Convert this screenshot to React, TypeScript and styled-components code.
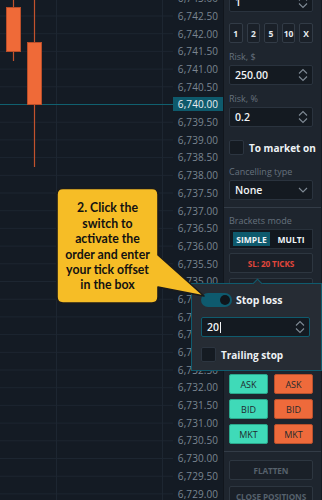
import React from 'react';
import styled, { createGlobalStyle } from 'styled-components';

const GlobalStyle = createGlobalStyle`
  html, body { margin: 0; padding: 0; background: #141b24; }
  body { font-family: "Open Sans", "Liberation Sans", sans-serif; }
`;

const STEP = 17.7;
const FIRST_Y = 16 - STEP;

const Screen = styled.div`
  position: relative;
  width: 322px;
  height: 500px;
  overflow: hidden;
  display: flex;
  background: #141b24;
`;

const ChartArea = styled.div`
  flex: none;
  width: 173px;
  height: 500px;
`;

const PriceAxis = styled.div`
  flex: none;
  width: 50px;
  display: flex;
  flex-direction: column;
  margin-top: ${FIRST_Y - STEP / 2}px;
`;

const PriceLabel = styled.div<{ $active?: boolean }>`
  flex: none;
  height: ${STEP}px;
  display: flex;
  align-items: center;
  justify-content: center;
  font-size: 10px;
  letter-spacing: 0.1px;
  color: ${p => (p.$active ? '#e8eef2' : '#7a8591')};
  background: ${p => (p.$active ? '#0e5a6c' : 'transparent')};
  ${p => p.$active && `height: 14px; margin: ${(STEP - 14) / 2}px 0;`}
`;

const Panel = styled.div`
  flex: none;
  width: 98px;
  background: #1e252e;
  border-left: 1px solid #11161d;
  display: flex;
  flex-direction: column;
  padding: 0 8px 0 5px;
  box-sizing: border-box;
`;

const Field = styled.div<{ $first?: boolean; $accent?: boolean }>`
  flex: none;
  height: 20px;
  box-sizing: border-box;
  background: #141a21;
  border: 1px solid ${p => (p.$accent ? '#0f5b6e' : '#2a333e')};
  border-radius: 2px;
  display: flex;
  align-items: center;
  justify-content: space-between;
  padding: 0 4px 0 5px;
  color: #f1f4f6;
  font-size: 10.5px;
  font-weight: 600;
  margin-top: ${p => (p.$first ? '-8px' : '0')};
`;

const Label = styled.div<{ $top: number }>`
  flex: none;
  margin-top: ${p => p.$top}px;
  margin-bottom: 3px;
  font-size: 9px;
  color: #66717d;
  line-height: 11px;
`;

const QuickRow = styled.div`
  flex: none;
  display: flex;
  gap: 4px;
  margin-top: 11px;
`;

const QuickButton = styled.div`
  width: 13px;
  height: 20px;
  box-sizing: border-box;
  border: 1px solid #323b46;
  border-radius: 2px;
  background: #1a2028;
  color: #e6ebef;
  font-size: 8.5px;
  font-weight: 700;
  display: flex;
  align-items: center;
  justify-content: center;
  flex: 1;
`;

const CheckRow = styled.div<{ $top: number }>`
  flex: none;
  display: flex;
  align-items: center;
  gap: 5px;
  margin-top: ${p => p.$top}px;
  color: #eef2f5;
  font-size: 10px;
  font-weight: 700;
  white-space: nowrap;
`;

const CheckBox = styled.div`
  width: 15px;
  height: 15px;
  flex: none;
  box-sizing: border-box;
  border: 1px solid #2c3540;
  background: #151b22;
  border-radius: 2px;
`;

const Separator = styled.div<{ $top: number }>`
  flex: none;
  height: 1px;
  background: #333c47;
  margin: ${p => p.$top}px -8px 0 -5px;
`;

const Segmented = styled.div`
  flex: none;
  display: flex;
  height: 20px;
  box-sizing: border-box;
  border: 1px solid #28313b;
  background: #12171e;
  padding: 2px 3px;
  gap: 3px;
`;

const Segment = styled.div<{ $on?: boolean }>`
  flex: ${p => (p.$on ? '0 0 37px' : '1')};
  display: flex;
  align-items: center;
  justify-content: center;
  background: ${p => (p.$on ? '#0e5a6d' : 'transparent')};
  color: #eef3f6;
  font-size: 8.5px;
  font-weight: 700;
`;

const TextButton = styled.div<{ $top: number; $color?: string }>`
  flex: none;
  height: 20px;
  margin-top: ${p => p.$top}px;
  box-sizing: border-box;
  border: 1px solid #2d3640;
  background: #1a2028;
  border-radius: 2px;
  display: flex;
  align-items: center;
  justify-content: center;
  font-size: 8.2px;
  font-weight: 700;
  letter-spacing: -0.1px;
  color: ${p => p.$color || '#56616c'};
  white-space: nowrap;
  overflow: hidden;
`;

const OrderGrid = styled.div`
  flex: none;
  display: grid;
  grid-template-columns: 1fr 1fr;
  column-gap: 6px;
  row-gap: 5px;
  margin-top: 76px;
`;

const OrderButton = styled.div<{ $side: 'buy' | 'sell' }>`
  height: 20px;
  box-sizing: border-box;
  border-radius: 2px;
  background: ${p => (p.$side === 'buy' ? '#3fdab8' : '#ee6a3b')};
  border: 1px solid ${p => (p.$side === 'buy' ? '#2aa88c' : '#b8502c')};
  color: #1f2a2e;
  font-size: 9px;
  display: flex;
  align-items: center;
  justify-content: center;
`;

const Popover = styled.div`
  position: absolute;
  left: 191px;
  top: 283px;
  width: 131px;
  height: 88px;
  box-sizing: border-box;
  background: #262c34;
  border: 1px solid #0f5b6e;
  padding: 9px 11px 0 9px;
  display: flex;
  flex-direction: column;

  &::before {
    content: '';
    position: absolute;
    top: -4px;
    left: 62px;
    width: 6px;
    height: 6px;
    background: #262c34;
    border-left: 1px solid #0f5b6e;
    border-top: 1px solid #0f5b6e;
    transform: rotate(45deg);
  }
`;

const SwitchRow = styled.div`
  display: flex;
  align-items: center;
  gap: 4px;
  color: #eef2f5;
  font-size: 10.5px;
  font-weight: 700;
  margin-bottom: 10px;
`;

const SwitchTrack = styled.div`
  width: 31px;
  height: 14px;
  border-radius: 7px;
  background: #0e5a6e;
  display: flex;
  align-items: center;
  justify-content: flex-end;
  padding: 0 2px;
  box-sizing: border-box;
`;

const SwitchKnob = styled.div`
  width: 10px;
  height: 10px;
  border-radius: 50%;
  background: #10161c;
`;

const Caret = styled.span`
  display: inline-block;
  width: 1px;
  height: 11px;
  background: #f1f4f6;
  margin-left: 1px;
  vertical-align: -2px;
`;

const CalloutText = styled.div`
  position: absolute;
  left: 57px;
  top: 189px;
  width: 101px;
  height: 115px;
  display: flex;
  align-items: center;
  justify-content: center;
  text-align: center;
  font-family: "Lato", "Open Sans", sans-serif;
  font-weight: 700;
  font-size: 12.3px;
  line-height: 15.4px;
  color: #121212;
`;

const Overlay = styled.svg`
  position: absolute;
  left: 0;
  top: 0;
  pointer-events: none;
`;

const Stepper = () => (
  <svg width="10" height="14" viewBox="0 0 10 14" fill="none" stroke="#7f8a95" strokeWidth="1.1">
    <path d="M1 5.5 L5 1.5 L9 5.5" />
    <path d="M1 8.5 L5 12.5 L9 8.5" />
  </svg>
);

const ChevronDown = () => (
  <svg width="10" height="6" viewBox="0 0 10 6" fill="none" stroke="#7f8a95" strokeWidth="1.1">
    <path d="M1 1 L5 5 L9 1" />
  </svg>
);

const prices: string[] = [];
for (let i = 0; i < 30; i++) {
  const v = 6743 - i * 0.5;
  prices.push(v.toLocaleString('en-US', { minimumFractionDigits: 2, maximumFractionDigits: 2 }));
}

const Chart = () => {
  const lines = prices.map((_, i) => FIRST_Y + i * STEP);
  return (
    <svg width="173" height="500" viewBox="0 0 173 500">
      {lines.map((y, i) => (
        <line key={i} x1="0" x2="173" y1={y} y2={y} stroke="#1d2631" strokeWidth="1" />
      ))}
      <line x1="56.5" x2="56.5" y1="0" y2="500" stroke="#1d2631" />
      <line x1="162.5" x2="162.5" y1="0" y2="500" stroke="#1d2631" />
      <line x1="0" x2="173" y1="104.5" y2="104.5" stroke="#10606f" strokeWidth="1" />
      <line x1="13.5" x2="13.5" y1="0" y2="61" stroke="#c2522d" strokeWidth="1.2" />
      <rect x="6.5" y="7.5" width="14" height="44" fill="#ef6a38" stroke="#b94e2a" />
      <line x1="34.5" x2="34.5" y1="0" y2="167" stroke="#c2522d" strokeWidth="1.2" />
      <rect x="27.5" y="42.5" width="14" height="62" fill="#ef6a38" stroke="#b94e2a" />
    </svg>
  );
};

export default function App() {
  return (
    <>
      <GlobalStyle />
      <Screen>
        <ChartArea>
          <Chart />
        </ChartArea>
        <PriceAxis>
          {prices.map(p => (
            <PriceLabel key={p} $active={p === '6,740.00'}>
              {p}
            </PriceLabel>
          ))}
        </PriceAxis>
        <Panel>
          <Field $first>
            <span>1</span>
            <Stepper />
          </Field>
          <QuickRow>
            {['1', '2', '5', '10', 'X'].map(q => (
              <QuickButton key={q}>{q}</QuickButton>
            ))}
          </QuickRow>
          <Label $top={8}>Risk, $</Label>
          <Field>
            <span>250.00</span>
            <Stepper />
          </Field>
          <Label $top={8}>Risk, %</Label>
          <Field>
            <span>0.2</span>
            <Stepper />
          </Field>
          <CheckRow $top={13}>
            <CheckBox />
            To market on
          </CheckRow>
          <Label $top={11}>Cancelling type</Label>
          <Field>
            <span>None</span>
            <ChevronDown />
          </Field>
          <Separator $top={7} />
          <Label $top={7}>Brackets mode</Label>
          <Segmented>
            <Segment $on>SIMPLE</Segment>
            <Segment>MULTI</Segment>
          </Segmented>
          <TextButton $top={4} $color="#e2463b">SL: 20 TICKS</TextButton>
          <TextButton $top={5} />
          <OrderGrid>
            <OrderButton $side="buy">ASK</OrderButton>
            <OrderButton $side="sell">ASK</OrderButton>
            <OrderButton $side="buy">BID</OrderButton>
            <OrderButton $side="sell">BID</OrderButton>
            <OrderButton $side="buy">MKT</OrderButton>
            <OrderButton $side="sell">MKT</OrderButton>
          </OrderGrid>
          <Separator $top={7} />
          <TextButton $top={8}>FLATTEN</TextButton>
          <TextButton $top={6}>CLOSE POSITIONS</TextButton>
        </Panel>

        <Popover>
          <SwitchRow>
            <SwitchTrack>
              <SwitchKnob />
            </SwitchTrack>
            Stop loss
          </SwitchRow>
          <Field $accent>
            <span>
              20
              <Caret />
            </span>
            <Stepper />
          </Field>
          <CheckRow $top={10}>
            <CheckBox />
            Trailing stop
          </CheckRow>
        </Popover>

        <Overlay width="322" height="500" viewBox="0 0 322 500">
          <path
            d="M63 188.5 H152 Q158 188.5 158 194.5 V255 L204 296 L158 287 V297 Q158 303 152 303 H63 Q57 303 57 297 V194.5 Q57 188.5 63 188.5 Z"
            fill="#f6bd26"
            stroke="#1b1b1b"
            strokeWidth="1.6"
            strokeLinejoin="round"
          />
        </Overlay>
        <CalloutText>
          2. Click the
          <br />
          switch to
          <br />
          activate the
          <br />
          order and enter
          <br />
          your tick offset
          <br />
          in the box
        </CalloutText>
      </Screen>
    </>
  );
}
